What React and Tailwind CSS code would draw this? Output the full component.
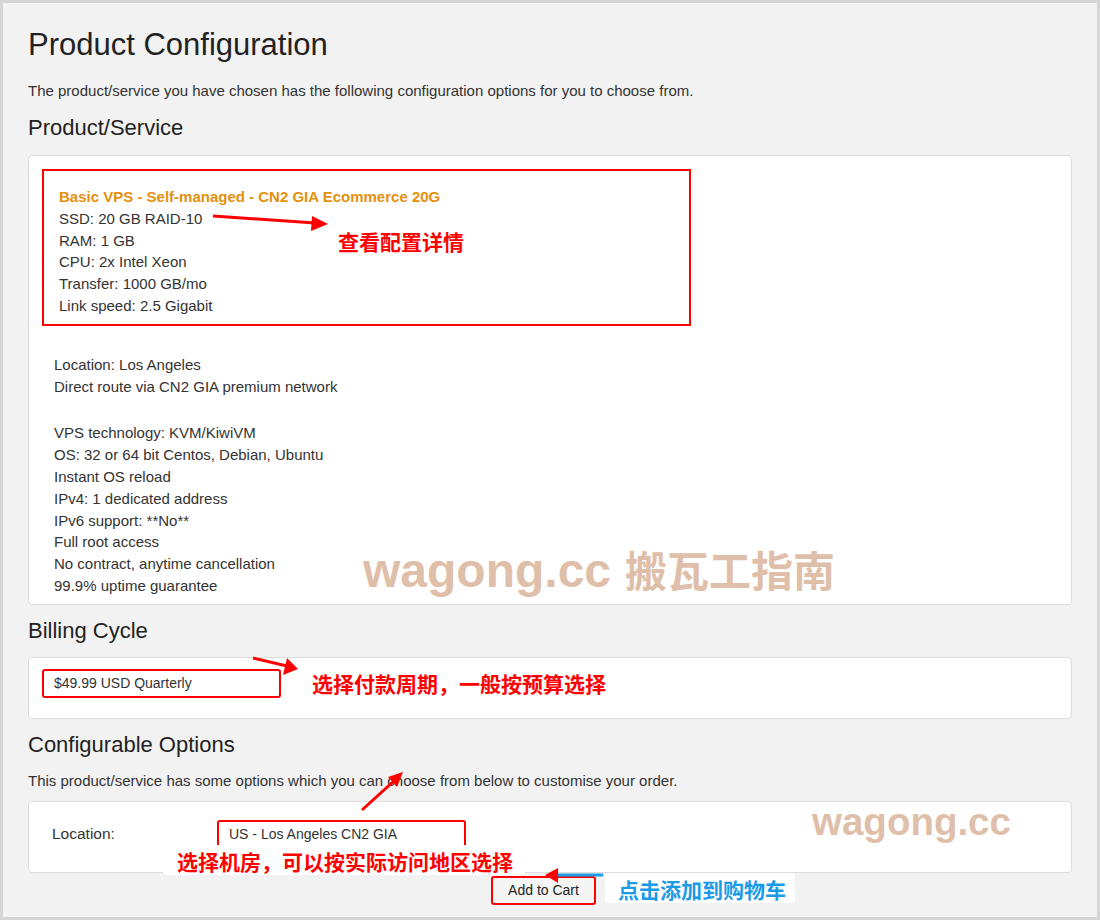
import React from 'react';

const specs = [
  "SSD: 20 GB RAID-10",
  "RAM: 1 GB",
  "CPU: 2x Intel Xeon",
  "Transfer: 1000 GB/mo",
  "Link speed: 2.5 Gigabit",
];

const features = [
  "VPS technology: KVM/KiwiVM",
  "OS: 32 or 64 bit Centos, Debian, Ubuntu",
  "Instant OS reload",
  "IPv4: 1 dedicated address",
  "IPv6 support: **No**",
  "Full root access",
  "No contract, anytime cancellation",
  "99.9% uptime guarantee",
];

const cjk = { fontFamily: '"Noto Sans CJK SC", "Liberation Sans", sans-serif' };

const Arrows = () => (
  <svg className="absolute inset-0 pointer-events-none" width="1100" height="920" viewBox="0 0 1100 920">
    <line x1="213" y1="216" x2="315" y2="223" stroke="#ff0000" strokeWidth="3" />
    <polygon points="328,224 312,216 311,231" fill="#ff0000" />

    <line x1="253" y1="658" x2="287" y2="666" stroke="#ff0000" strokeWidth="3" />
    <polygon points="298,669 287,658 283,675" fill="#ff0000" />

    <line x1="362" y1="810" x2="395" y2="780" stroke="#ff0000" strokeWidth="3" />
    <polygon points="403,772 388,777 397,787" fill="#ff0000" />

    <line x1="555" y1="875" x2="603" y2="875" stroke="#1a9be8" strokeWidth="3" />
    <polygon points="545,875 558,868 558,883" fill="#ff0000" />
  </svg>
);

export default function App() {
  return (
    <div
      className="w-[1100px] h-[920px] bg-[#d6d6d6] p-[3px] overflow-hidden"
      style={{ fontFamily: '"Liberation Sans", Arial, sans-serif' }}
    >
      <div className="relative h-full bg-[#f2f2f2] px-[25px] pt-[25px] text-[#333]">
        <h1 className="text-[31px] leading-[33px] text-[#222]">Product Configuration</h1>
        <p className="mt-[20px] text-[15px] leading-[20px]">
          The product/service you have chosen has the following configuration options for you to choose from.
        </p>

        <h2 className="mt-[15px] text-[22px] leading-[24px] text-[#222]">Product/Service</h2>
        <div className="mt-[15px] bg-white border border-[#dddddd] rounded-[4px] pt-[13px] pb-[7px] px-[13px] text-[15px] leading-[21.8px]">
          <div className="w-[649px] border-2 border-[#ff0000] pt-[15px] pb-[7px] pl-[15px]">
            <div className="font-bold text-[#e5900e]">Basic VPS - Self-managed - CN2 GIA Ecommerce 20G</div>
            {specs.map((s) => (
              <div key={s}>{s}</div>
            ))}
          </div>
          <div className="pl-[12px] mt-[28px]">
            <div>Location: Los Angeles</div>
            <div>Direct route via CN2 GIA premium network</div>
            <div className="mt-[25px]">
              {features.map((f) => (
                <div key={f}>{f}</div>
              ))}
            </div>
          </div>
        </div>

        <h2 className="mt-[14px] text-[22px] leading-[24px] text-[#222]">Billing Cycle</h2>
        <div className="mt-[14px] h-[62px] bg-white border border-[#dddddd] rounded-[4px] pt-[11px] px-[13px]">
          <div className="w-[239px] h-[29px] border-2 border-[#ff0000] rounded-[3px] pl-[10px] flex items-center text-[14px]">
            $49.99 USD Quarterly
          </div>
        </div>

        <h2 className="mt-[14px] text-[22px] leading-[24px] text-[#222]">Configurable Options</h2>
        <p className="mt-[14px] text-[15px] leading-[20px]">
          This product/service has some options which you can choose from below to customise your order.
        </p>
        <div className="mt-[10px] h-[72px] bg-white border border-[#dddddd] rounded-[4px] pt-[18px] px-[23px] flex items-start">
          <div className="w-[165px] pt-[4px] text-[15.5px] leading-[20px]">Location:</div>
          <div className="w-[249px] h-[29px] border-2 border-[#ff0000] rounded-[3px] pl-[10px] flex items-center text-[14px]">
            US - Los Angeles CN2 GIA
          </div>
        </div>

        <div className="pl-[463px] mt-[3px]">
          <button className="w-[105px] h-[29px] bg-[#f5f5f5] border-2 border-[#ff0000] rounded-[3px] text-[14px] text-[#222]">
            Add to Cart
          </button>
        </div>

        {/* watermarks */}
        <div className="absolute left-[360px] top-[538px] font-bold text-[#dfbfa9] whitespace-nowrap flex items-baseline">
          <span className="text-[48px] leading-[56px]">wagong.cc</span>
          <span className="ml-[14px] text-[42px] leading-[56px]" style={cjk}>搬瓦工指南</span>
        </div>
        <div className="absolute left-[809px] top-[797px] font-bold text-[#dfbfa9] text-[38.5px] leading-[44px]">
          wagong.cc
        </div>

        {/* annotations */}
        <div className="absolute left-[335px] top-[222px] text-[21px] leading-[32px] font-bold text-[#ff0000]" style={cjk}>
          查看配置详情
        </div>
        <div className="absolute left-[309px] top-[664px] text-[21px] leading-[32px] font-bold text-[#ff0000]" style={cjk}>
          选择付款周期，一般按预算选择
        </div>
        <div className="absolute left-[160px] top-[842px] w-[362px] h-[30px] bg-white rounded-[3px] pl-[14px] text-[21px] leading-[32px] font-bold text-[#ff0000]" style={cjk}>
          选择机房，可以按实际访问地区选择
        </div>
        <div className="absolute left-[602px] top-[870px] w-[190px] h-[30px] bg-white rounded-[3px] pl-[13px] text-[21px] leading-[32px] font-bold text-[#1a9be8]" style={cjk}>
          点击添加到购物车
        </div>

        <div className="absolute -left-[3px] -top-[3px]">
          <Arrows />
        </div>
      </div>
    </div>
  );
}
